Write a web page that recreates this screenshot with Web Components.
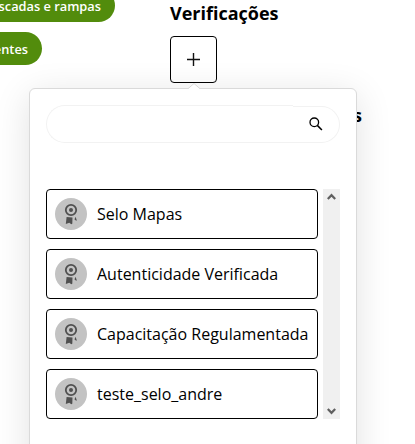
<!DOCTYPE html>
<html lang="pt-BR">
<head>
<meta charset="utf-8">
<title>Verificações</title>
<style>
html,body{margin:0;height:444px;overflow:hidden;background:#fff;color:#000;font-family:"Open Sans","Noto Sans",sans-serif}
</style>
</head>
<body>
<seal-page></seal-page>
<script>
const define = (name, html) => {
  const t = document.createElement('template');
  t.innerHTML = html;
  customElements.define(name, class extends HTMLElement {
    constructor() {
      super();
      this.attachShadow({mode: 'open'}).append(t.content.cloneNode(true));
    }
  });
};

define('tag-pill', `<style>
:host{display:flex;box-sizing:border-box;height:33px;justify-content:flex-end;align-items:center;padding-right:14px;
background:#528c0c;color:#fff;font-weight:600;font-size:12.8px;line-height:18px;white-space:nowrap;border-radius:0 17px 17px 0}
</style><slot></slot>`);

define('section-title', `<style>
:host{display:block;font-weight:700;font-size:18px;line-height:26px;white-space:nowrap}
</style><slot></slot>`);

define('add-button', `<style>
:host{display:block}
button{display:grid;place-items:center;box-sizing:border-box;width:47px;height:47px;padding:0;background:#fff;border:1px solid #000;border-radius:4px}
svg{display:block}
</style><button aria-label="Adicionar"><svg width="15" height="15" viewBox="0 0 15 15"><path d="M7.5 1v13M1 7.5h13" stroke="#111" stroke-width="1.4" fill="none"/></svg></button>`);

define('search-field', `<style>
:host{display:flex;height:38px}
.input{box-sizing:border-box;flex:1;border:1px solid #f2f2f2;border-right:0;border-radius:19px 0 0 19px;background:#fff}
.button{display:flex;align-items:center;justify-content:flex-end;box-sizing:border-box;width:47px;margin-top:1px;padding-right:16px;border:1px solid #f2f2f2;border-left:0;border-radius:0 19px 19px 0;background:#fff}
svg{display:block}
</style><div class="input"></div><div class="button"><svg width="15" height="15" viewBox="0 0 15 15" fill="none" stroke="#000"><circle cx="6.3" cy="5.3" r="4.3" stroke-width="1.3"/><path d="M9.3 8.4l4.6 4.6" stroke-width="1.5"/></svg></div>`);

define('seal-icon', `<style>
:host{display:block;width:32px;height:32px;flex:none}svg{display:block}
</style><svg width="32" height="32" viewBox="0 0 32 32"><circle cx="16" cy="16" r="16" fill="#c3c3c3"/>
<circle cx="16" cy="12" r="5.2" fill="none" stroke="#505050" stroke-width="1.8"/><circle cx="16" cy="12" r="2" fill="#505050"/>
<path d="M11.6 19l5.9.5-.2 6.2-1 .6-2-1.5-3.5 1.1zM19.6 20.9l1-2.2 1.3 4.1-2-.7z" fill="#505050"/></svg>`);

define('seal-item', `<style>
:host{display:flex;box-sizing:border-box;height:50px;align-items:center;gap:10px;padding:0 8px;border:1px solid #000;border-radius:4px;background:#fff;font-size:16px;line-height:22px;white-space:nowrap}
</style><seal-icon></seal-icon><span><slot></slot></span>`);

define('scroll-rail', `<style>
:host{display:flex;flex-direction:column;justify-content:space-between;align-items:center;box-sizing:border-box;width:17px;padding:4px 0;background:#f0f0f0}
svg{display:block}
</style><svg width="9" height="8" viewBox="0 0 9 8"><path d="M.8 6l3.7-3.8L8.2 6" fill="none" stroke="#606060" stroke-width="2.2"/></svg>
<svg width="9" height="8" viewBox="0 0 9 8"><path d="M.8 2l3.7 3.8L8.2 2" fill="none" stroke="#606060" stroke-width="2.2"/></svg>`);

define('seal-popover', `<style>
:host{display:block;box-sizing:border-box;width:328px;height:390px;padding:16px;border:1px solid #dadada;border-radius:6px;background:#fff;box-shadow:0 7px 36px rgba(0,0,0,.12)}
.arrow{position:absolute;left:158px;top:-6px}
.body{display:flex;gap:5px;margin-top:46px}
.list{display:flex;flex-direction:column;gap:10px;width:272px}
</style>
<svg class="arrow" width="12" height="7" viewBox="0 0 12 7"><path d="M0 6L6 .5 12 6V7H0z" fill="#fff"/><path d="M0 5.7L6 .5l6 5.2" fill="none" stroke="#dadada"/></svg>
<search-field></search-field>
<div class="body"><div class="list"><slot></slot></div><scroll-rail></scroll-rail></div>`);

define('seal-page', `<style>
:host{display:grid;grid-template-columns:170px 1fr;height:444px;position:relative;overflow:hidden}
.tags{display:flex;flex-direction:column;align-items:flex-start;gap:10px;margin-top:-11px}
.first{width:115px}.second{width:42px}
.side{display:flex;flex-direction:column;align-items:flex-start}
.side add-button{margin-top:10px}
.next{margin:19px 0 0 183px}
seal-popover{position:absolute;left:29px;top:88px}
</style>
<div class="tags"><tag-pill class="first">scadas e rampas</tag-pill><tag-pill class="second">entes</tag-pill></div>
<div class="side"><section-title>Verificações</section-title><add-button></add-button><section-title class="next">s</section-title></div>
<seal-popover><seal-item>Selo Mapas</seal-item><seal-item>Autenticidade Verificada</seal-item><seal-item>Capacitação Regulamentada</seal-item><seal-item>teste_selo_andre</seal-item></seal-popover>`);
</script>
</body>
</html>
